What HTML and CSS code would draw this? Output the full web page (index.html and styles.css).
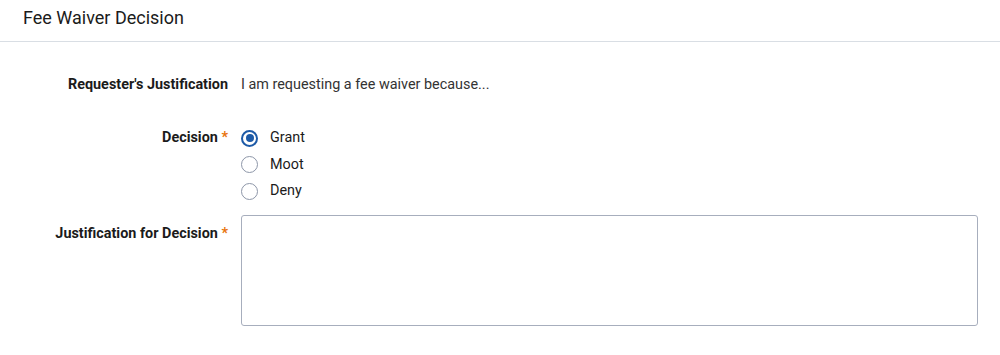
FILE: index.html
```html
<!DOCTYPE html>
<html lang="en">
<head>
    <meta charset="UTF-8">
    <meta name="viewport" content="width=device-width, initial-scale=1.0">
    <title>Fee Waiver Decision</title>
    <link rel="stylesheet" href="styles.css">
</head>
<body>
    <div class="panel">
        <div class="panel-header">
            <h1 class="panel-title">Fee Waiver Decision</h1>
        </div>
        <form class="decision-form">
            <div class="form-row">
                <div class="form-label">Requester's Justification</div>
                <div class="form-value">I am requesting a fee waiver because...</div>
            </div>
            <div class="form-row">
                <div class="form-label">Decision <span class="req">*</span></div>
                <div class="form-value radio-group">
                    <label class="radio"><input type="radio" name="decision" value="grant" checked><span class="radio-mark"></span>Grant</label>
                    <label class="radio"><input type="radio" name="decision" value="moot"><span class="radio-mark"></span>Moot</label>
                    <label class="radio"><input type="radio" name="decision" value="deny"><span class="radio-mark"></span>Deny</label>
                </div>
            </div>
            <div class="form-row row-textarea">
                <div class="form-label">Justification for Decision <span class="req">*</span></div>
                <div class="form-value">
                    <textarea class="justification"></textarea>
                </div>
            </div>
        </form>
    </div>
</body>
</html>
```

FILE: styles.css
```css
* {
    margin: 0;
    padding: 0;
    box-sizing: border-box;
}
body {
    background: #fff;
    font-family: Roboto, "Liberation Sans", sans-serif;
    color: #1b1b1b;
}
.panel-header {
    height: 42px;
    border-bottom: 1px solid #d9dee4;
    padding-left: 23px;
    display: flex;
    align-items: center;
}
.panel-title {
    font-size: 18px;
    font-weight: 400;
    color: #1b1b1b;
    padding-bottom: 6px;
}
.decision-form {
    padding-top: 33px;
    display: flex;
    flex-direction: column;
    gap: 33px;
}
.form-row {
    display: grid;
    grid-template-columns: 228px 1fr;
    column-gap: 13px;
    font-size: 14.4px;
    line-height: 20px;
}
.row-textarea {
    margin-top: -19px;
}
.form-label {
    text-align: right;
    font-weight: 700;
    color: #1b1b1b;
}
.row-textarea .form-label {
    padding-top: 9px;
}
.req {
    color: #e8730c;
}
.form-value {
    color: #333;
    padding-right: 22px;
}
.radio-group {
    display: flex;
    flex-direction: column;
    gap: 6.5px;
}
.radio {
    display: flex;
    align-items: center;
    color: #1b1b1b;
    cursor: pointer;
}
.radio input {
    display: none;
}
.radio-mark {
    width: 17px;
    height: 17px;
    border: 1px solid #8d96a8;
    border-radius: 50%;
    margin-right: 12px;
    position: relative;
    background: #fff;
}
.radio input:checked + .radio-mark {
    border: 2px solid #1d5aa7;
}
.radio input:checked + .radio-mark::after {
    content: "";
    position: absolute;
    left: 2.5px;
    top: 2.5px;
    width: 8px;
    height: 8px;
    border-radius: 50%;
    background: #1d5aa7;
}
.justification {
    display: block;
    width: 100%;
    height: 111px;
    border: 1.5px solid #a7aebd;
    border-radius: 3px;
    resize: none;
    font-family: inherit;
    font-size: 14px;
    padding: 6px 8px;
}
```
